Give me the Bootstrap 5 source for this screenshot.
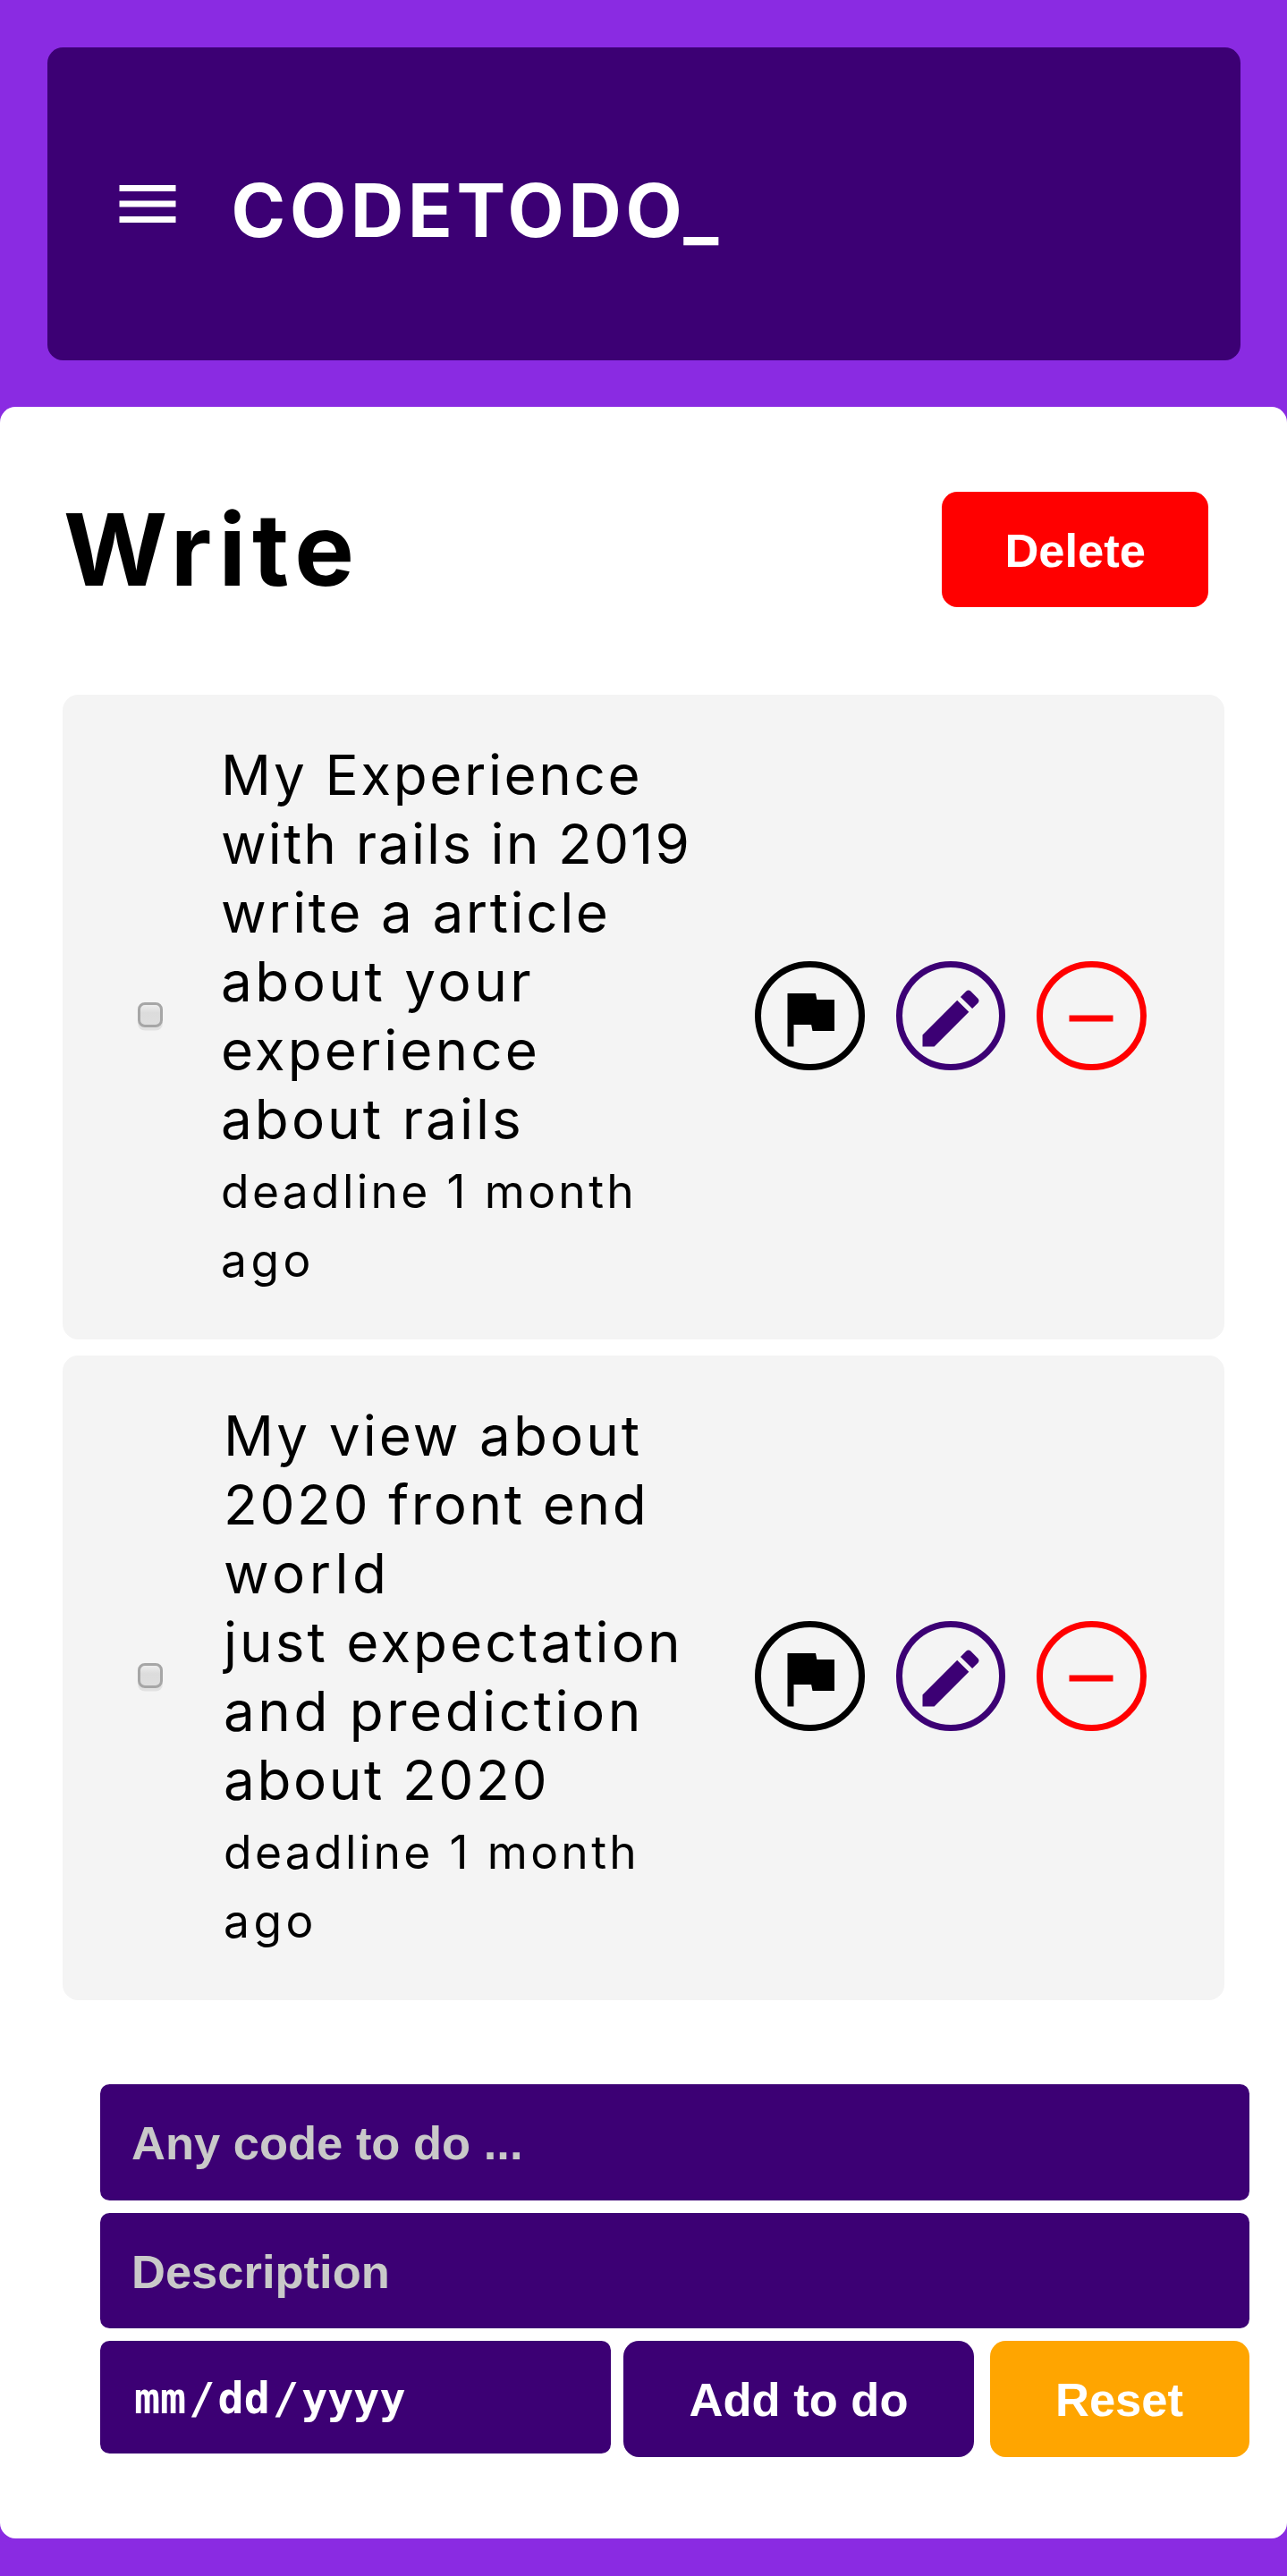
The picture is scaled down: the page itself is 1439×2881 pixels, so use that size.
<!DOCTYPE html>
<html lang="en">
<head>
<meta charset="utf-8">
<title>CODETODO_</title>
<link href="https://cdn.jsdelivr.net/npm/bootstrap@5.3.0/dist/css/bootstrap.min.css" rel="stylesheet">
<style>
  :root { --violet: #8a2be2; --indigo: #3c0074; }
  body { background: var(--violet); color: #000; font-family: Inter, "Open Sans", sans-serif; padding-top: 52.5px; }
  .topbar { background: var(--indigo); border-radius: 17.5px; height: 350px; margin: 0 52.5px 52.5px; padding: 0 70px; }
  .topbar svg { width: 84px; height: 84px; }
  .brand { font-size: 82px; line-height: 1; font-weight: 700; letter-spacing: 4.8px; margin: 17px 0 0 52px; }
  .panel { border-radius: 17.5px; padding: 94.5px 0 91px; }
  .panel-head { padding: 0 88px 0 71px; margin-bottom: 98px; }
  .panel-title { font-size: 112px; line-height: 129.5px; font-weight: 700; letter-spacing: 7.3px; margin: .5px 0 -.5px; }
  .act { font-family: "Liberation Sans", Arial, sans-serif; font-size: 52.5px; line-height: 59.5px; font-weight: 700;
         color: #fff; border: 0; border-radius: 17.5px; padding: 36px 70px 34px; white-space: nowrap; }
  .act-red { background: #f00; }
  .act-indigo, .act-orange { padding-left: 73.5px; padding-right: 73.5px; }
  .act-indigo { background: var(--indigo); }
  .act-orange { background: orange; }
  .act-pair { gap: 17.5px; }
  .todo-list { padding: 0 70px; gap: 17.5px; }
  .todo { background: #f4f4f4; border-radius: 17.5px; height: 721px; padding: 0 87.5px 0 84px; }
  .tick { appearance: none; flex: none; width: 28px; height: 28px; margin: 0 0 5px; border: 3.5px solid #a6a6a6; border-radius: 8px;
          background: linear-gradient(#ededed, #dcdcdc 40%, #dedede); box-shadow: 0 3.5px 0 #e2e2e2; }
  .todo-text { font-size: 62px; line-height: 77px; width: 539px; margin: 0 auto 3px 65px; }
  .todo + .todo .todo-text { margin-left: 68px; width: 536px; }
  .todo-text span { display: block; white-space: nowrap; letter-spacing: 3.05px; }
  .todo-text em { font-style: normal; font-size: 51.5px; line-height: 1; letter-spacing: 3.35px; }
  .todo-text .l20 { letter-spacing: 2.1px; }
  .todo-text .l26 { letter-spacing: 2.6px; }
  .todo-text .l36 { letter-spacing: 3.5px; }
  .todo-text .l46 { letter-spacing: 4.5px; }
  .tools { gap: 35px; margin-bottom: 3px; }
  .ring { width: 122.5px; height: 122.5px; border: 7px solid currentColor; border-radius: 50%; padding: 5px 0 0; background: none; }
  .ring svg { flex: none; width: 84px; height: 84px; fill: currentColor; }
  .c-indigo { color: var(--indigo); }
  .c-red { color: #f00; }
  .entry { margin: 94.5px 42.5px 0 112px; gap: 14px; }
  .field { background: var(--indigo); border: 0; border-radius: 10.5px; color: #fff; padding: 36px 35px 34px; line-height: 59.5px; height: 129.5px;
           font-family: "Liberation Sans", Arial, sans-serif; font-size: 52.5px; font-weight: 700; }
  .field::placeholder { color: #c9c9c9; opacity: 1; }
  .datebox { font-family: "DejaVu Sans Mono", monospace; font-size: 48.3px; height: 126px; width: 571px; padding: 32.5px 38px; line-height: 62px; }
  .datebox i { font-style: normal; padding: 0 3.2px; }
</style>
</head>
<body>
<header class="topbar d-flex align-items-center text-white">
  <svg viewBox="0 0 24 24" fill="#fff"><path d="M3 18h18v-2H3v2zm0-5h18v-2H3v2zm0-7v2h18V6H3z"/></svg>
  <h1 class="brand">CODETODO_</h1>
</header>
<main class="panel bg-white">
  <div class="panel-head d-flex justify-content-between">
    <h2 class="panel-title">Write</h2>
    <button class="act act-red">Delete</button>
  </div>
  <div class="todo-list d-flex flex-column">
    <article class="todo d-flex align-items-center">
      <input class="tick" type="checkbox">
      <div class="todo-text">
        <span class="l26">My Experience</span><span class="l20">with rails in 2019</span>
        <span class="l26">write a article</span><span class="l36">about your</span><span>experience</span><span>about rails</span>
        <span><em>deadline 1 month</em></span><span><em class="l46">ago</em></span>
      </div>
      <div class="tools d-flex">
        <button class="ring d-flex align-items-center justify-content-center text-black"><svg viewBox="0 0 24 24"><path d="M14.4 6L14 4H5v17h2v-7h5.6l.4 2h7V6z"/></svg></button>
        <button class="ring d-flex align-items-center justify-content-center c-indigo"><svg viewBox="0 0 24 24"><path d="M3 17.25V21h3.75L17.81 9.94l-3.75-3.75L3 17.25zM20.71 7.04c.39-.39.39-1.02 0-1.41l-2.34-2.34c-.39-.39-1.02-.39-1.41 0l-1.83 1.83 3.75 3.75 1.83-1.83z"/></svg></button>
        <button class="ring d-flex align-items-center justify-content-center c-red"><svg viewBox="0 0 24 24"><path d="M19 13H5v-2h14v2z"/></svg></button>
      </div>
    </article>
    <article class="todo d-flex align-items-center">
      <input class="tick" type="checkbox">
      <div class="todo-text">
        <span>My view about</span><span class="l26">2020 front end</span><span class="l46">world</span>
        <span>just expectation</span><span class="l36">and prediction</span><span class="l26">about 2020</span>
        <span><em>deadline 1 month</em></span><span><em class="l46">ago</em></span>
      </div>
      <div class="tools d-flex">
        <button class="ring d-flex align-items-center justify-content-center text-black"><svg viewBox="0 0 24 24"><path d="M14.4 6L14 4H5v17h2v-7h5.6l.4 2h7V6z"/></svg></button>
        <button class="ring d-flex align-items-center justify-content-center c-indigo"><svg viewBox="0 0 24 24"><path d="M3 17.25V21h3.75L17.81 9.94l-3.75-3.75L3 17.25zM20.71 7.04c.39-.39.39-1.02 0-1.41l-2.34-2.34c-.39-.39-1.02-.39-1.41 0l-1.83 1.83 3.75 3.75 1.83-1.83z"/></svg></button>
        <button class="ring d-flex align-items-center justify-content-center c-red"><svg viewBox="0 0 24 24"><path d="M19 13H5v-2h14v2z"/></svg></button>
      </div>
    </article>
  </div>
  <form class="entry d-flex flex-column">
    <input class="field w-100" type="text" placeholder="Any code to do ...">
    <input class="field w-100" type="text" placeholder="Description">
    <div class="d-flex justify-content-between align-items-start">
      <div class="field datebox">mm<i>/</i>dd<i>/</i>yyyy</div>
      <div class="act-pair d-flex">
        <button type="button" class="act act-indigo">Add to do</button>
        <button type="reset" class="act act-orange">Reset</button>
      </div>
    </div>
  </form>
</main>
<script src="https://cdn.jsdelivr.net/npm/bootstrap@5.3.0/dist/js/bootstrap.bundle.min.js"></script>
</body>
</html>
